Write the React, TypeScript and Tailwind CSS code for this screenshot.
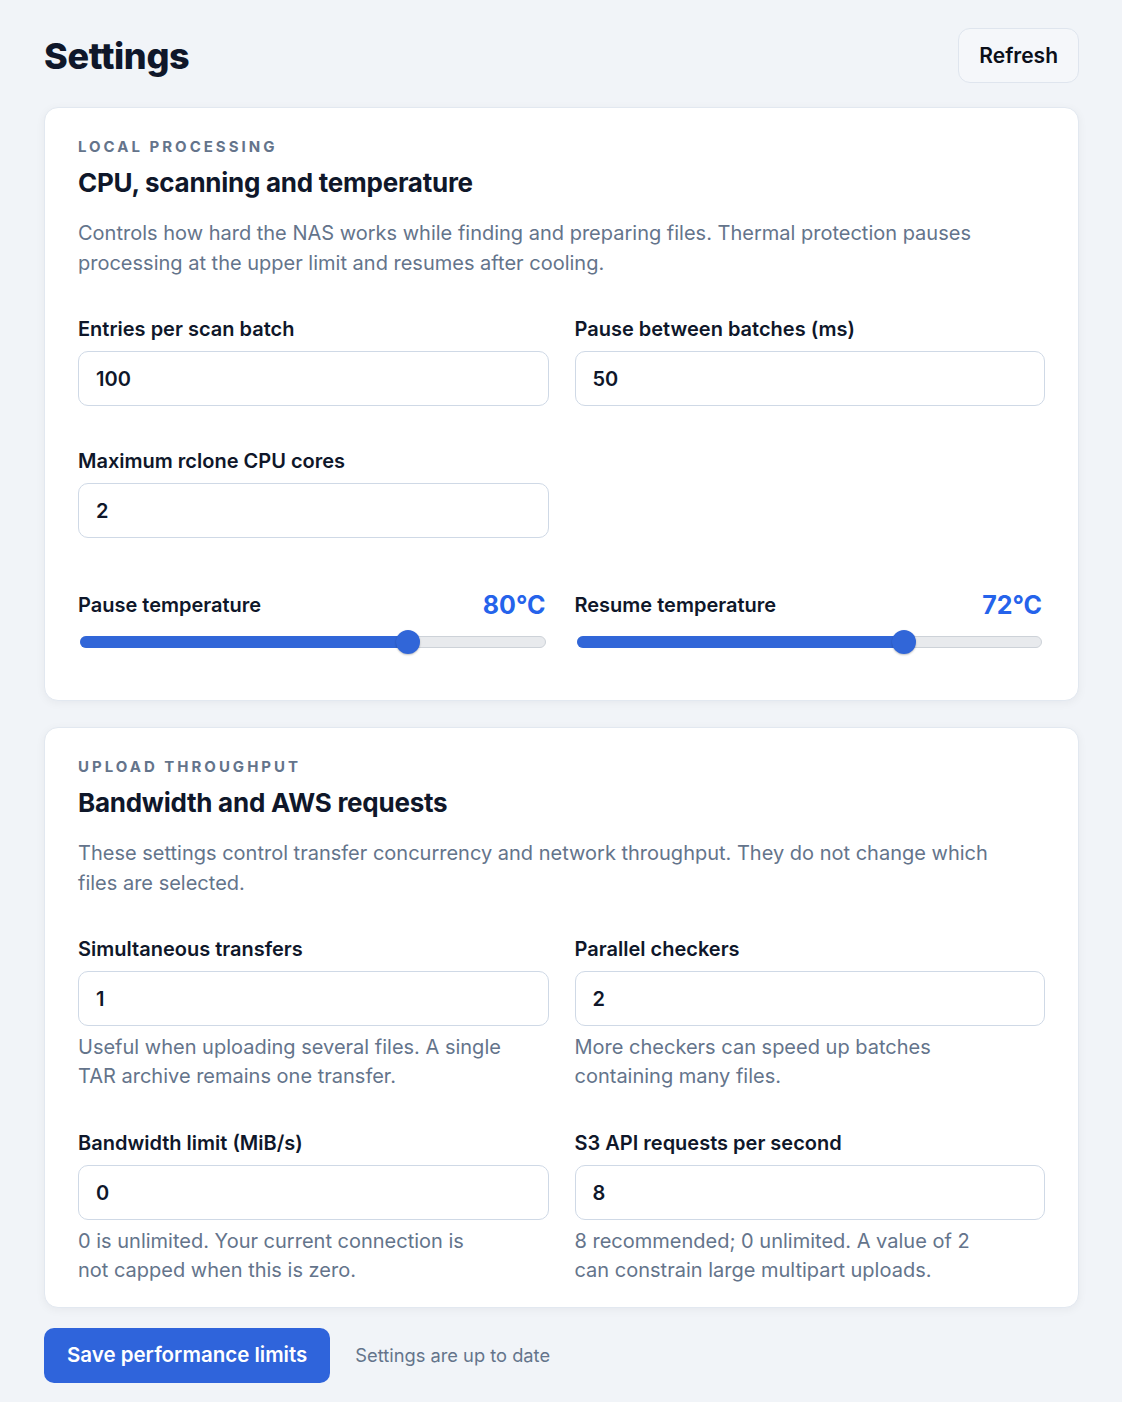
import React, { useState } from 'react';

type NumberFieldProps = {
  label: string;
  value: string;
  help?: string;
};

function NumberField({ label, value, help }: NumberFieldProps) {
  const [val, setVal] = useState(value);
  return (
    <div className="flex flex-col">
      <label className="text-[20px] font-semibold text-[#0f172a] leading-[26px]">{label}</label>
      <input
        type="text"
        value={val}
        onChange={(e) => setVal(e.target.value)}
        className="mt-[9px] h-[55px] w-full rounded-[10px] border border-[#cfd9e6] bg-white px-[17px] text-[20px] font-semibold text-[#0f172a] outline-none"
      />
      {help && (
        <p className="mt-[7px] whitespace-pre-line text-[20px] leading-[29px] text-[#64748b]">{help}</p>
      )}
    </div>
  );
}

function TempSlider({ label, value, pct }: { label: string; value: string; pct: number }) {
  return (
    <div className="flex flex-col pr-[3px]">
      <div className="flex items-end justify-between">
        <span className="text-[20px] font-semibold text-[#0f172a] leading-[26px]">{label}</span>
        <span className="text-[25px] font-bold text-[#2563eb] leading-[26px]">{value}</span>
      </div>
      <div className="relative mt-[12px] h-[24px]">
        <div className="absolute left-[2px] right-0 top-[6px] h-[12px] rounded-full border border-[#cdd2d8] bg-[#e8eaed]" />
        <div
          className="absolute left-[2px] top-[6px] h-[12px] rounded-full bg-[#3166d8]"
          style={{ width: `${pct}%` }}
        />
        <div
          className="absolute top-0 h-[24px] w-[24px] -translate-x-1/2 rounded-full bg-[#3166d8] shadow-[0_1px_2px_rgba(0,0,0,0.25)]"
          style={{ left: `${pct}%` }}
        />
      </div>
    </div>
  );
}

function Card({ eyebrow, title, desc, children }: { eyebrow: string; title: string; desc: string; children: React.ReactNode }) {
  return (
    <section className="rounded-[14px] border border-[#e2e8f0] bg-white px-[33px] pt-[30px] shadow-[0_2px_10px_rgba(15,23,42,0.05)]">
      <div className="text-[15px] font-bold uppercase tracking-[0.2em] text-[#64748b] leading-[18px]">{eyebrow}</div>
      <h2 className="mt-[12px] text-[26px] font-bold tracking-[-0.01em] text-[#0f172a] leading-[30px]">{title}</h2>
      <p className="mt-[20px] max-w-[910px] text-[20px] leading-[30px] text-[#64748b]">{desc}</p>
      {children}
    </section>
  );
}

export default function App() {
  return (
    <div className="min-h-[1402px] bg-[#f1f4f8] pl-[44px] pr-[43px] pt-[28px] pb-[20px] font-['Inter',sans-serif] antialiased">
      <header className="flex items-center justify-between">
        <h1 className="text-[36px] font-extrabold tracking-[-0.01em] text-[#0f172a]">Settings</h1>
        <button className="h-[55px] rounded-[12px] border border-[#dfe5ee] bg-[#f5f7fa] px-[20px] text-[21px] font-semibold text-[#0b0f19]">
          Refresh
        </button>
      </header>

      <div className="mt-[24px] flex flex-col gap-[26px]">
        <Card
          eyebrow="Local processing"
          title="CPU, scanning and temperature"
          desc="Controls how hard the NAS works while finding and preparing files. Thermal protection pauses processing at the upper limit and resumes after cooling."
        >
          <div className="mt-[38px] grid grid-cols-2 gap-x-[26px] gap-y-[42px] pb-[46px]">
            <NumberField label="Entries per scan batch" value="100" />
            <NumberField label="Pause between batches (ms)" value="50" />
            <NumberField label="Maximum rclone CPU cores" value="2" />
            <div />
            <div className="mt-[12px]">
              <TempSlider label="Pause temperature" value="80°C" pct={70.5} />
            </div>
            <div className="mt-[12px]">
              <TempSlider label="Resume temperature" value="72°C" pct={70.5} />
            </div>
          </div>
        </Card>

        <Card
          eyebrow="Upload throughput"
          title="Bandwidth and AWS requests"
          desc="These settings control transfer concurrency and network throughput. They do not change which files are selected."
        >
          <div className="mt-[38px] grid grid-cols-2 gap-x-[26px] gap-y-[39px] pb-[22px]">
            <NumberField
              label="Simultaneous transfers"
              value="1"
              help={'Useful when uploading several files. A single\nTAR archive remains one transfer.'}
            />
            <NumberField
              label="Parallel checkers"
              value="2"
              help={'More checkers can speed up batches\ncontaining many files.'}
            />
            <NumberField
              label="Bandwidth limit (MiB/s)"
              value="0"
              help={'0 is unlimited. Your current connection is\nnot capped when this is zero.'}
            />
            <NumberField
              label="S3 API requests per second"
              value="8"
              help={'8 recommended; 0 unlimited. A value of 2\ncan constrain large multipart uploads.'}
            />
          </div>
        </Card>
      </div>

      <div className="mt-[20px] flex items-center gap-[25px]">
        <button className="h-[55px] rounded-[10px] bg-[#2f64db] px-[23px] text-[20.5px] font-semibold text-white">
          Save performance limits
        </button>
        <span className="text-[18.3px] text-[#64748b]">Settings are up to date</span>
      </div>
    </div>
  );
}
